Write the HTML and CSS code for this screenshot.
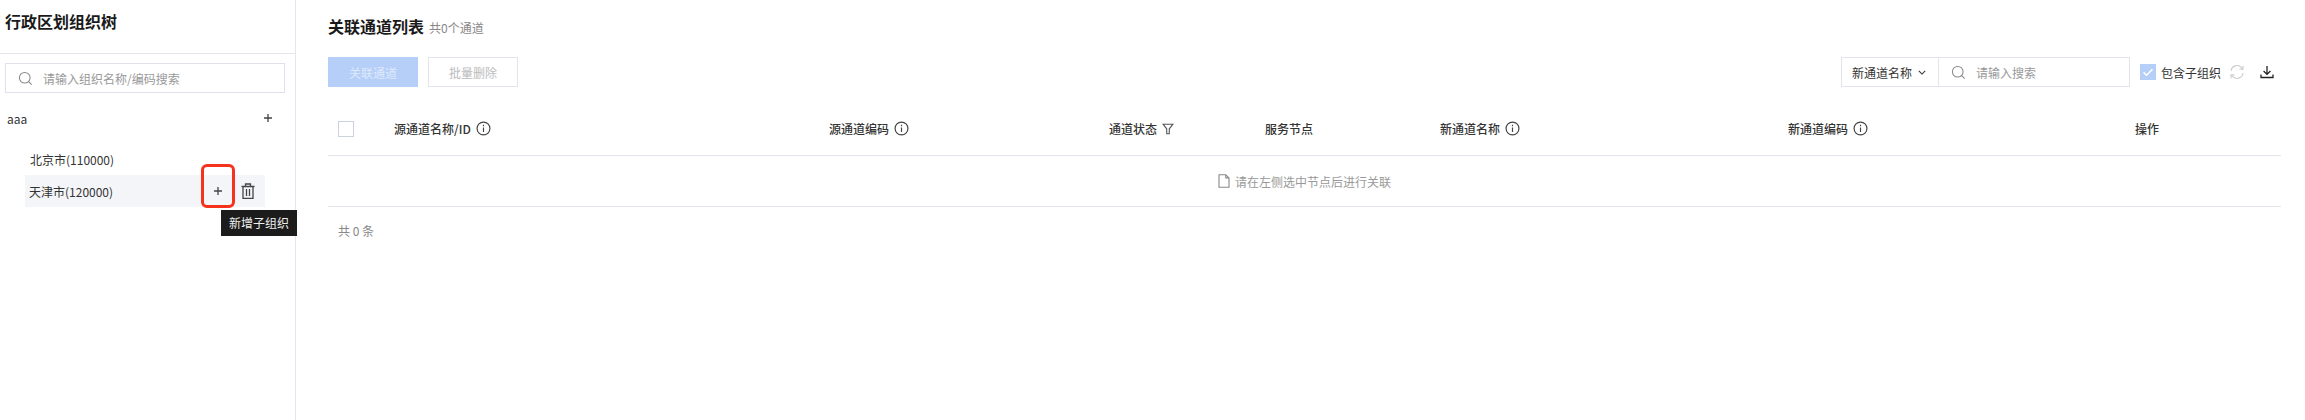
FILE: index.html
```html
<!DOCTYPE html>
<html lang="zh-CN">
<head>
    <meta charset="UTF-8">
    <title>关联通道列表</title>
    <link rel="stylesheet" href="styles.css">
</head>
<body>
    <div class="page">
        <aside class="sidebar">
            <div class="sidebar-title">行政区划组织树</div>
            <div class="sidebar-body">
                <div class="input tree-search">
                    <svg class="icon search-icon" viewBox="0 0 16 16"><circle cx="7.2" cy="7.2" r="5.7"/><path d="M11.4 11.4l3.2 3.2"/></svg>
                    <span class="placeholder">请输入组织名称/编码搜索</span>
                </div>
                <div class="tree-root">
                    <span>aaa</span>
                    <svg class="icon plus-icon" viewBox="0 0 10 10"><path d="M5 1v8M1 5h8"/></svg>
                </div>
                <div class="tree-node">北京市(110000)</div>
                <div class="tree-node hovered">
                    <span>天津市(120000)</span>
                    <div class="node-actions">
                        <svg class="icon plus-icon" viewBox="0 0 10 10"><path d="M5 1v8M1 5h8"/></svg>
                        <svg class="icon trash-icon" viewBox="0 0 14 16"><path d="M.5 3.500h13M4.500 3.500V1h5v2.500M2 3.500v12h10v-12M5.500 6v7M8.500 6v7"/></svg>
                    </div>
                    <div class="highlight"></div>
                    <div class="tooltip">新增子组织</div>
                </div>
            </div>
        </aside>

        <main class="content">
            <div class="content-title">
                <h2>关联通道列表</h2>
                <span class="count">共0个通道</span>
            </div>

            <div class="toolbar">
                <button class="btn btn-primary">关联通道</button>
                <button class="btn btn-default">批量删除</button>
                <div class="toolbar-right">
                    <div class="search-group">
                        <div class="select">
                            <span>新通道名称</span>
                            <svg class="icon chevron-icon" viewBox="0 0 10 6"><path d="M1 1l4 4 4-4"/></svg>
                        </div>
                        <div class="input group-search">
                            <svg class="icon search-icon" viewBox="0 0 16 16"><circle cx="7.2" cy="7.2" r="5.7"/><path d="M11.4 11.4l3.2 3.2"/></svg>
                            <span class="placeholder">请输入搜索</span>
                        </div>
                    </div>
                    <div class="include-sub">
                        <span class="checkbox checked">
                            <svg viewBox="0 0 16 16"><path d="M3.500 8.200l3 3 6-6"/></svg>
                        </span>
                        <span>包含子组织</span>
                    </div>
                    <svg class="icon refresh-icon" viewBox="0 0 16 16"><path d="M2 7a6 6 0 0 1 10.600-3.200L14 5.300M14 1.800v3.500h-3.500M14 9a6 6 0 0 1-10.600 3.200L2 10.700M2 14.200v-3.500h3.500"/></svg>
                    <svg class="icon download-icon" viewBox="0 0 14 14"><path d="M7 1v8.200M3.600 6l3.400 3.400L10.400 6M1 9.500v3h12v-3"/></svg>
                </div>
            </div>

            <div class="table">
                <div class="table-row table-head">
                    <div class="cell"><span class="checkbox"></span></div>
                    <div class="cell">源通道名称/ID<svg class="icon info-icon" viewBox="0 0 14 14"><circle cx="7" cy="7" r="6"/><path d="M7 6v4.200M7 3.600v1.200"/></svg></div>
                    <div class="cell">源通道编码<svg class="icon info-icon" viewBox="0 0 14 14"><circle cx="7" cy="7" r="6"/><path d="M7 6v4.200M7 3.600v1.200"/></svg></div>
                    <div class="cell">通道状态<svg class="icon filter-icon" viewBox="0 0 12 12"><path d="M1 1.200h10L7.300 5.800v5H4.700v-5z"/></svg></div>
                    <div class="cell">服务节点</div>
                    <div class="cell">新通道名称<svg class="icon info-icon" viewBox="0 0 14 14"><circle cx="7" cy="7" r="6"/><path d="M7 6v4.200M7 3.600v1.200"/></svg></div>
                    <div class="cell">新通道编码<svg class="icon info-icon" viewBox="0 0 14 14"><circle cx="7" cy="7" r="6"/><path d="M7 6v4.200M7 3.600v1.200"/></svg></div>
                    <div class="cell">操作</div>
                </div>
                <div class="table-empty">
                    <svg class="icon file-icon" viewBox="0 0 12 14"><path d="M1 .7h6.800L11 3.900v9.400H1zM7.800 .7v3.200H11"/></svg>
                    <span>请在左侧选中节点后进行关联</span>
                </div>
            </div>
            <div class="table-footer">共 0 条</div>
        </main>
    </div>
</body>
</html>
```

FILE: styles.css
```css
body {
    margin: 0;
    font-family: "Noto Sans CJK SC", "Noto Sans", sans-serif;
    font-size: 12px;
    color: #333;
    background-color: #fff;
}
.page {
    display: flex;
    height: 420px;
    overflow: hidden;
}
.icon {
    fill: none;
    stroke: currentColor;
    stroke-width: 1.1;
    flex-shrink: 0;
}

/* left tree */
.sidebar {
    width: 295px;
    flex-shrink: 0;
    border-right: 1px solid #e4e6ef;
}
.sidebar-title {
    height: 54px;
    box-sizing: border-box;
    padding: 9px 5px 0;
    font-size: 16px;
    line-height: 24px;
    font-weight: 600;
    color: #1a1a1a;
    border-bottom: 1px solid #e4e6ef;
}
.sidebar-body {
    padding: 9px 10px 0 5px;
}
.input {
    display: flex;
    align-items: center;
    box-sizing: border-box;
    height: 30px;
    border: 1px solid #dfe2ec;
}
.placeholder {
    color: #999;
}
.search-icon {
    width: 15px;
    height: 15px;
    color: #888;
}
.tree-search {
    padding-left: 12px;
    gap: 10px;
}
.tree-root {
    display: flex;
    justify-content: space-between;
    align-items: center;
    height: 20px;
    margin-top: 15px;
    padding: 0 12px 0 2px;
    color: #333;
}
.plus-icon {
    width: 10px;
    height: 10px;
    stroke-width: 1.3;
    color: #444;
}
.tree-node {
    position: relative;
    display: flex;
    justify-content: space-between;
    align-items: center;
    width: 240px;
    height: 32px;
    margin-left: 20px;
    padding-left: 4px;
    box-sizing: border-box;
}
.tree-root + .tree-node {
    margin-top: 15px;
    height: 32px;
    padding-left: 5px;
}
.tree-node.hovered {
    background-color: #f4f5f9;
}
.node-actions {
    display: flex;
    align-items: center;
    gap: 18px;
    padding-right: 10px;
}
.trash-icon {
    width: 14px;
    height: 16px;
    stroke-width: 1.3;
    color: #444;
}

/* red annotation + tooltip */
.highlight {
    position: absolute;
    left: 176px;
    top: -11px;
    width: 28px;
    height: 38px;
    border: 3px solid #f5321e;
    border-radius: 6px;
}
.tooltip {
    position: absolute;
    left: 196px;
    top: 35px;
    width: 76px;
    height: 26px;
    line-height: 26px;
    text-align: center;
    color: #eee;
    background-color: #1c1c1c;
}

/* right side */
.content {
    flex: 1;
    min-width: 0;
    padding: 14px 24px 0 32px;
}
.content-title {
    display: flex;
    align-items: baseline;
    gap: 5px;
    height: 25px;
}
.content-title h2 {
    margin: 0;
    font-size: 16px;
    line-height: 24px;
    font-weight: 600;
    color: #1a1a1a;
}
.count {
    color: #888;
}
.toolbar {
    display: flex;
    align-items: center;
    gap: 10px;
    margin-top: 18px;
    height: 30px;
}
.btn {
    width: 90px;
    height: 30px;
    padding: 0;
    font-family: inherit;
    font-size: 12px;
    box-sizing: border-box;
}
.btn-primary {
    color: #dfe9fb;
    background-color: #b5cff9;
    border: none;
}
.btn-default {
    color: #bbb;
    background-color: #fff;
    border: 1px solid #e2e4ec;
}
.toolbar-right {
    display: flex;
    align-items: center;
    margin-left: auto;
}
.search-group {
    display: flex;
    height: 30px;
    box-sizing: border-box;
    border: 1px solid #e2e4ec;
}
.select {
    display: flex;
    align-items: center;
    gap: 6px;
    width: 97px;
    box-sizing: border-box;
    padding-left: 10px;
    border-right: 1px solid #e2e4ec;
}
.chevron-icon {
    width: 8px;
    height: 5px;
    stroke-width: 1.3;
}
.group-search {
    width: 190px;
    height: 28px;
    border: none;
    padding-left: 12px;
    gap: 10px;
}
.checkbox {
    display: block;
    width: 16px;
    height: 16px;
    box-sizing: border-box;
    border: 1px solid #cdd3de;
}
.checkbox.checked {
    border: none;
    background-color: #b5cff9;
}
.checkbox svg {
    display: block;
    fill: none;
    stroke: #fff;
    stroke-width: 1.6;
}
.include-sub {
    display: flex;
    align-items: center;
    gap: 5px;
    margin-left: 10px;
}
.refresh-icon {
    width: 16px;
    height: 16px;
    margin-left: 8px;
    color: #ccc;
}
.download-icon {
    width: 14px;
    height: 14px;
    margin-left: 15px;
    margin-right: 7px;
    color: #222;
    stroke-width: 1.3;
}

/* table */
.table {
    margin-top: 18px;
}
.table-row {
    display: grid;
    grid-template-columns: 66px 435px 280px 156px 175px 348px 347px 146px;
}
.table-head {
    box-sizing: border-box;
    height: 51px;
    padding-bottom: 3px;
    border-bottom: 1px solid #e4e6ef;
    font-weight: 500;
}
.cell {
    display: flex;
    align-items: center;
    gap: 5px;
}
.cell:first-child {
    padding-left: 10px;
}
.info-icon {
    width: 15px;
    height: 15px;
    color: #444;
}
.filter-icon {
    width: 12px;
    height: 12px;
    color: #555;
}
.table-empty {
    display: flex;
    justify-content: center;
    align-items: center;
    gap: 5px;
    height: 50px;
    color: #999;
    border-bottom: 1px solid #e4e6ef;
}
.file-icon {
    width: 12px;
    height: 14px;
    color: #888;
}
.table-footer {
    margin-top: 14px;
    padding-left: 10px;
    line-height: 20px;
    color: #888;
}
```
